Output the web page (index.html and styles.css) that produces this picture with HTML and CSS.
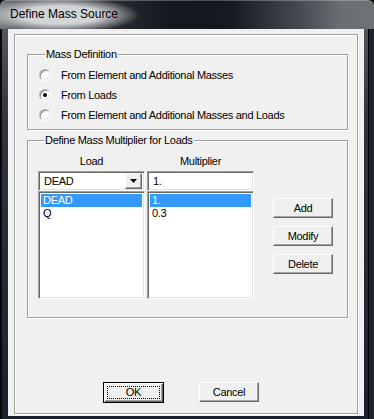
FILE: index.html
```html
<!DOCTYPE html>
<html>
<head>
    <title>Define Mass Source</title>
    <link rel="stylesheet" href="styles.css">
</head>
<body>

    <div class="window">
        <div class="titlebar"><span class="title">Define Mass Source</span></div>

        <div class="client">
            <div class="frame">

                <fieldset class="group group-mass">
                    <legend>Mass Definition</legend>
                    <label class="radio"><span class="radio-mark"></span>From Element and Additional Masses</label>
                    <label class="radio"><span class="radio-mark checked"></span>From Loads</label>
                    <label class="radio"><span class="radio-mark"></span>From Element and Additional Masses and Loads</label>
                </fieldset>

                <fieldset class="group group-mult">
                    <legend>Define Mass Multiplier for Loads</legend>
                    <div class="mult-body">
                        <div class="col">
                            <div class="col-head">Load</div>
                            <div class="combo">
                                <span class="combo-text">DEAD</span>
                                <span class="combo-btn">
                                    <svg width="7" height="4" viewBox="0 0 7 4"><polygon points="0,0 7,0 3.5,4" fill="#000"/></svg>
                                </span>
                            </div>
                            <div class="listbox">
                                <div class="item selected">DEAD</div>
                                <div class="item">Q</div>
                            </div>
                        </div>
                        <div class="col">
                            <div class="col-head">Multiplier</div>
                            <div class="textbox">1.</div>
                            <div class="listbox">
                                <div class="item selected">1.</div>
                                <div class="item">0.3</div>
                            </div>
                        </div>
                        <div class="actions">
                            <button class="btn">Add</button>
                            <button class="btn">Modify</button>
                            <button class="btn">Delete</button>
                        </div>
                    </div>
                </fieldset>

                <div class="footer">
                    <button class="btn btn-default"><span class="focus">OK</span></button>
                    <button class="btn">Cancel</button>
                </div>

            </div>
        </div>
    </div>

</body>
</html>
```

FILE: styles.css
```css
html, body {
    margin: 0;
    background: #000;
}
body {
    font-family: "Liberation Sans", Arial, sans-serif;
    font-size: 11px;
    letter-spacing: -0.3px;
    color: #000;
}

/* window frame */
.window {
    width: 374px;
    height: 419px;
    box-sizing: border-box;
    padding: 0 10px 3px 8px;
    border-radius: 6px 6px 0 0;
    background: linear-gradient(to bottom, #5d6166 0, #30353c 120px, #18212b 100%);
    box-shadow: inset 2px 0 #05070a, inset -5px 0 #1b232d, inset -6px 0 #000;
    display: flex;
    flex-direction: column;
}
.titlebar {
    height: 29px;
    margin: 0 -10px 0 -8px;
    padding-left: 10px;
    line-height: 29px;
    border-radius: 6px 6px 0 0;
    background:
        radial-gradient(ellipse 80px 18px at 60px 15px, rgba(210, 212, 214, 1) 50%, rgba(210, 212, 214, 0) 100%),
        linear-gradient(to right, #72757a 0, #55595e 18px, #262a30 120px, #14181e 170px, #161a20 230px, #474b51 300px, #6a6e73 340px, #6f7378 374px);
    box-shadow: inset 0 1px rgba(255, 255, 255, 0.25);
}
.title {
    font-size: 12px;
    letter-spacing: 0;
    color: #000;
}

.client {
    flex: 1;
    background: #f0f0f0;
    padding: 5px 0 0 6px;
}

/* etched outer frame */
.frame {
    width: 344px;
    height: 380px;
    box-sizing: border-box;
    border: 1px solid #a0a0a0;
    box-shadow: inset 1px 1px #fff, 1px 1px #fff;
    padding: 13px 0 10px 12px;
    display: flex;
    flex-direction: column;
}

/* group boxes */
.group {
    width: 321px;
    box-sizing: border-box;
    margin: 0;
    padding: 0;
    min-width: 0;
    border: 1px solid #a0a0a0;
    box-shadow: inset 1px 1px #fff, 1px 1px #fff;
}
.group legend {
    margin-left: 6px;
    padding: 0 1px;
    line-height: 13px;
    background: #f0f0f0;
}
.group-mass {
    padding: 4px 0 4px 11px;
}
.group-mult {
    margin-top: 4px;
    padding: 0 0 18px 10px;
}

.radio {
    display: flex;
    align-items: center;
    height: 20px;
}
.radio-mark {
    width: 12px;
    height: 12px;
    box-sizing: border-box;
    margin-right: 10px;
    border-radius: 50%;
    border: 1px solid;
    border-color: #b0b0b0 #fff #fff #b0b0b0;
    background: #fff;
    box-shadow: inset 1px 1px #8a8a8a, inset -1px -1px #e3e3e3;
    display: flex;
    align-items: center;
    justify-content: center;
}
.radio-mark.checked::after {
    content: "";
    width: 4px;
    height: 4px;
    border-radius: 50%;
    background: #000;
}

/* multiplier table */
.mult-body {
    display: flex;
    padding-top: 8px;
}
.col {
    width: 107px;
    display: flex;
    flex-direction: column;
}
.col + .col {
    margin-left: 2px;
}
.col-head {
    text-align: center;
    line-height: 13px;
    margin-bottom: 3px;
}
.combo, .textbox, .listbox {
    box-sizing: border-box;
    background: #fff;
    border: 1px solid;
    border-color: #a0a0a0 #fff #fff #a0a0a0;
    box-shadow: inset 1px 1px #696969, inset -1px -1px #e3e3e3;
}
.combo, .textbox {
    height: 20px;
    display: flex;
    align-items: center;
    padding: 2px 2px 2px 5px;
}
.combo-text {
    flex: 1;
}
.combo-btn {
    width: 17px;
    height: 16px;
    box-sizing: border-box;
    background: #f0f0f0;
    border: 1px solid;
    border-color: #fff #696969 #696969 #fff;
    box-shadow: inset -1px -1px #a0a0a0;
    display: flex;
    align-items: center;
    justify-content: center;
}
.combo-btn svg {
    display: block;
}
.listbox {
    height: 108px;
    padding: 2px;
}
.item {
    line-height: 13px;
    height: 13px;
    padding-left: 2px;
}
.item.selected {
    background: #3399ff;
    color: #fff;
}

.actions {
    margin-left: 19px;
    padding-top: 43px;
    display: flex;
    flex-direction: column;
    gap: 8px;
}

/* classic buttons */
.btn {
    width: 60px;
    height: 20px;
    box-sizing: border-box;
    padding: 0;
    font-family: inherit;
    font-size: 11px;
    letter-spacing: -0.3px;
    color: #000;
    background: #f0f0f0;
    border: 1px solid;
    border-color: #fff #696969 #696969 #fff;
    box-shadow: inset -1px -1px #a0a0a0;
    border-radius: 0;
}
.btn-default {
    width: 61px;
    height: 21px;
    border: 1px solid #000;
    box-shadow: inset 1px 1px #fff, inset -1px -1px #696969, inset -2px -2px #a0a0a0;
    display: flex;
    align-items: center;
    justify-content: center;
}
.focus {
    display: block;
    width: 51px;
    height: 11px;
    line-height: 11px;
    border: 1px dotted #000;
    text-align: center;
}

.footer {
    margin-top: auto;
    display: flex;
    gap: 35px;
    padding-left: 76px;
}
```
